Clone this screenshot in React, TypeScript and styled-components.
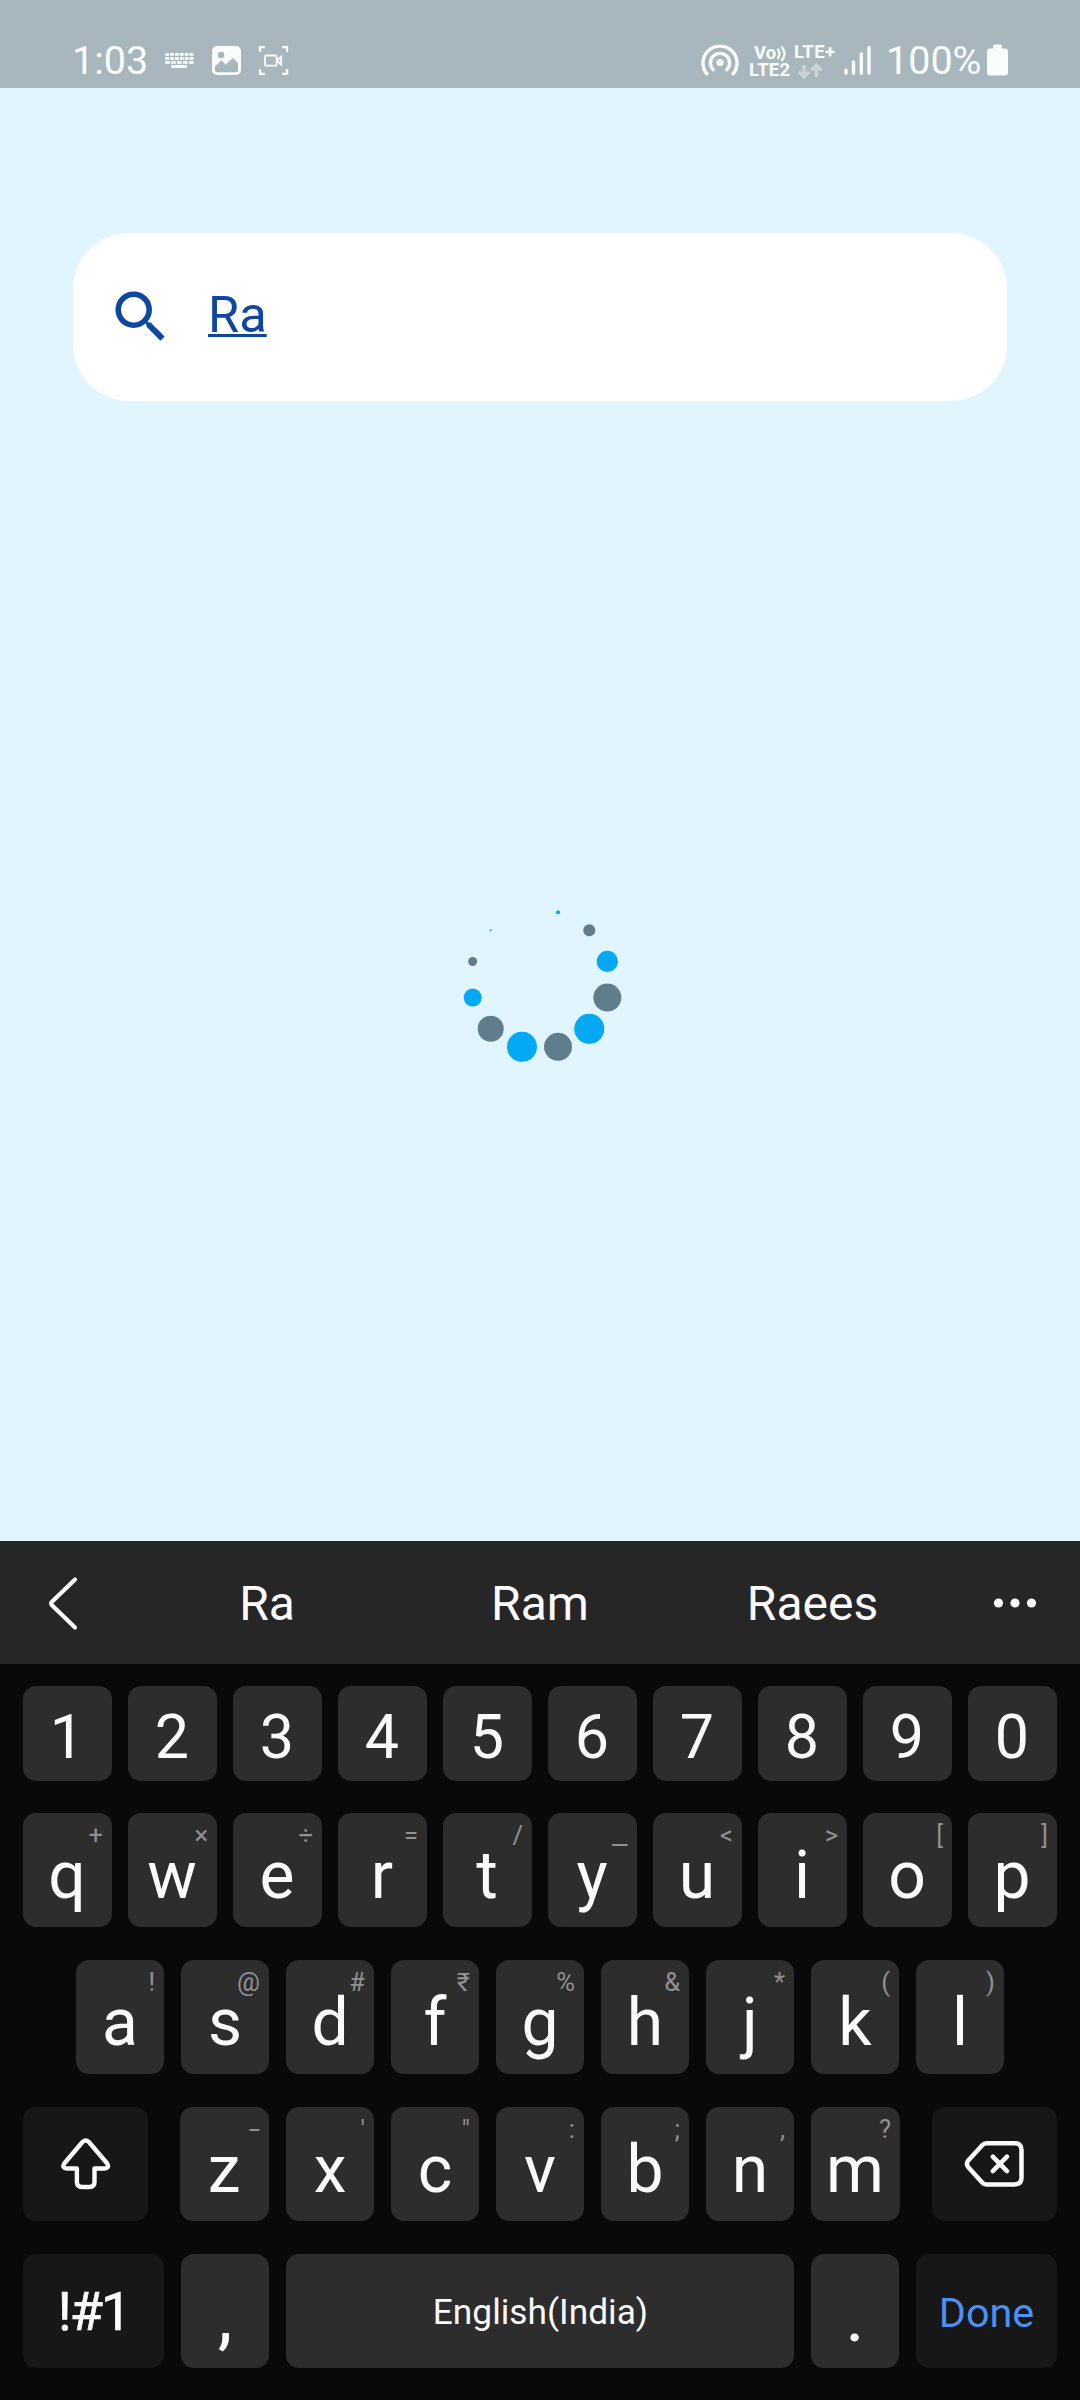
import React from "react";
import styled, { createGlobalStyle } from "styled-components";

const Global = createGlobalStyle`
  html, body { margin: 0; padding: 0; background: #e1f5fe; }
  * { box-sizing: border-box; }
`;

const Screen = styled.div`
  width: 1080px;
  height: 2400px;
  display: flex;
  flex-direction: column;
  background: #e1f5fe;
  font-family: Roboto, "Noto Sans", sans-serif;
  overflow: hidden;
`;

const StatusBar = styled.header`
  height: 88px;
  flex: none;
  padding: 36px 70px 0 72px;
  display: flex;
  justify-content: space-between;
  background: #a8b6bd;
  color: #fafcfc;
`;

const StatusGroup = styled.div`
  display: flex;
  align-items: flex-start;
`;

const StatusText = styled.span<{ $width: number }>`
  width: ${(p) => p.$width}px;
  padding-top: 1px;
  font-size: 39.5px;
  line-height: 47px;
  white-space: nowrap;
`;

const Glyph = styled.svg<{ $left?: number }>`
  display: block;
  flex: none;
  margin-left: ${(p) => p.$left ?? 0}px;
`;

const NetworkText = styled.text`
  font-family: Roboto, sans-serif;
  font-weight: 700;
  fill: #fafcfc;
`;

const Main = styled.main`
  flex: 1;
  padding: 145px 73px 0;
  display: flex;
  flex-direction: column;
  align-items: center;
`;

const SearchBox = styled.div`
  width: 934px;
  height: 168px;
  flex: none;
  border-radius: 56px;
  background: #fff;
  padding-left: 33.5px;
  display: flex;
  align-items: center;
`;

const SearchText = styled.span`
  margin-left: 34px;
  padding-bottom: 4px;
  font-size: 50.6px;
  line-height: 60px;
  color: #0d47a1;
  text-decoration: underline;
  text-decoration-thickness: 3px;
  text-underline-offset: 2px;
  text-decoration-skip-ink: none;
`;

const Spinner = styled.svg`
  display: block;
  margin-top: 488px;
`;

const Keyboard = styled.section`
  height: 859px;
  flex: none;
  background: #090909;
  color: #fafafa;
`;

const Suggestions = styled.div`
  height: 123px;
  background: #262626;
  display: grid;
  grid-template-columns: 125px 284px 262px 283px 126px;
  align-items: center;
  justify-items: center;
`;

const Suggestion = styled.span`
  padding-top: 2px;
  font-size: 48px;
  line-height: 56px;
`;

const Rows = styled.div`
  padding: 22px 23px 0;
  display: flex;
  flex-direction: column;
  gap: 33px;
`;

const Row = styled.div<{ $inset?: number; $after?: number }>`
  display: flex;
  justify-content: space-between;
  padding: 0 ${(p) => p.$inset ?? 0}px;
  margin-bottom: ${(p) => p.$after ?? 0}px;
`;

const LetterGroup = styled.div`
  width: 720px;
  display: flex;
  justify-content: space-between;
`;

const Key = styled.div<{ $w?: number; $h?: number; $dark?: boolean }>`
  position: relative;
  width: ${(p) => p.$w ?? 88}px;
  height: ${(p) => p.$h ?? 114}px;
  border-radius: 13px;
  background: ${(p) => (p.$dark ? "#171717" : "#2d2d2d")};
  display: flex;
  justify-content: center;
`;

const Label = styled.span<{ $size: number; $top: number; $color?: string; $spacing?: number; $shift?: number; $heavy?: boolean }>`
  font-size: ${(p) => p.$size}px;
  line-height: 80px;
  height: 80px;
  margin-top: ${(p) => p.$top}px;
  margin-right: ${(p) => p.$shift ?? 0}px;
  color: ${(p) => p.$color ?? "#fafafa"};
  letter-spacing: ${(p) => p.$spacing ?? 0}px;
  -webkit-text-stroke: ${(p) => (p.$heavy ? "0.7px #fafafa" : "0")};
  white-space: nowrap;
`;

const Hint = styled.span<{ $stretch: number }>`
  position: absolute;
  top: 7px;
  right: 9px;
  font-size: 25.5px;
  line-height: 30px;
  color: #919191;
  transform: scaleX(${(p) => p.$stretch});
  transform-origin: right center;
`;

const digits = "1234567890".split("");
const topRow = ["q+", "w×", "e÷", "r=", "t/", "y_", "u<", "i>", "o[", "p]"];
const midRow = ["a!", "s@", "d#", "f₹", "g%", "h&", "j*", "k(", "l)"];
const lowRow = ["z-", "x'", 'c"', "v:", "b;", "n,", "m?"];
const hintStretch: Record<string, number> = { "-": 1.6, _: 1.35 };

function Letter({ pair, w = 88 }: { pair: string; w?: number }) {
  return (
    <Key $w={w}>
      <Hint $stretch={hintStretch[pair[1]] ?? 1}>{pair[1]}</Hint>
      <Label $size={66} $top={23} $shift={w - 88}>{pair[0]}</Label>
    </Key>
  );
}

const dotRadii = [2, 6, 10.6, 14, 15, 14, 15, 13, 9, 4.5, 1, 0.2];

function Loading() {
  return (
    <Spinner width="180" height="180" viewBox="-90 -90.5 180 180">
      {dotRadii.map((r, i) => {
        const a = ((i * 30 - 75) * Math.PI) / 180;
        return (
          <circle
            key={i}
            cx={Math.cos(a) * 69.7}
            cy={Math.sin(a) * 69.7}
            r={r}
            fill={i % 2 ? "#607d8b" : "#03a9f4"}
          />
        );
      })}
    </Spinner>
  );
}

function KeyboardGlyph() {
  return (
    <Glyph $left={16} width="30" height="52" viewBox="165 36 30 52" fill="#fafcfc">
      {[0, 1, 2, 3, 4, 5].map((i) => (
        <rect key={i} x={165.3 + i * 4.85} y="53" width="3.8" height="2.8" />
      ))}
      {[0, 1, 2, 3, 4, 5].map((i) => (
        <rect key={i} x={165.3 + i * 4.85} y="57" width="3.8" height="3" />
      ))}
      {[0, 1, 2, 3, 4].map((i) => (
        <rect key={i} x={165.3 + i * 5.9} y="61.2" width="4.7" height="2.6" />
      ))}
      <rect x="171" y="65" width="16" height="3" />
    </Glyph>
  );
}

function PictureGlyph() {
  return (
    <Glyph $left={17} width="30" height="52" viewBox="212 36 30 52">
      <rect x="212" y="46" width="29" height="29" rx="5" fill="#fafcfc" />
      <circle cx="221" cy="55" r="3.2" fill="#a8b6bd" />
      <path d="M215 66.5l6.3-6.3 4.2 4.2 7.5-6.4 5 5v7.2a2 2 0 0 1-2 2h-19a2 2 0 0 1-2-2z" fill="#a8b6bd" />
    </Glyph>
  );
}

function RecordGlyph() {
  return (
    <Glyph $left={16} width="32" height="52" viewBox="258 36 32 52" fill="none" stroke="#fafcfc">
      <path d="M260 52v-4.8h5M282 47.2h5V52M287 69v4.8h-5M265 73.8h-5V69" strokeWidth="2.3" />
      <rect x="265" y="55.5" width="11.6" height="10.2" rx="1" strokeWidth="1.8" />
      <path d="M277 60.5l4.2-4v8.2l-4.2-4z" strokeWidth="1.8" />
    </Glyph>
  );
}

function HotspotGlyph() {
  return (
    <Glyph width="38" height="52" viewBox="701 36 38 52" fill="none" stroke="#fafcfc" strokeWidth="3.4">
      <circle cx="720" cy="62.5" r="3.6" fill="#fafcfc" stroke="none" />
      <path d="M714.2 70.6a9.6 9.6 0 1 1 11.6 0" />
      <path d="M707.8 75a17 17 0 1 1 24.4 0" />
    </Glyph>
  );
}

function NetworkGlyph() {
  return (
    <Glyph $left={10} width="88" height="52" viewBox="749 36 88 52">
      <NetworkText x="754" y="59.3" fontSize="18.5">Vo</NetworkText>
      <path d="M777.5 48.8q3.8 5 0 10M781.5 46.6q6 7.2 0 14.4" fill="none" stroke="#fafcfc" strokeWidth="2.3" />
      <NetworkText x="749" y="76" fontSize="18.5" textLength="41">LTE2</NetworkText>
      <NetworkText x="794" y="58" fontSize="18.5" textLength="41">LTE+</NetworkText>
      <path
        d="M804 65v11.5M799 71.8l5 5 5-5M816.3 77V65.5M811.3 70.2l5-5 5 5"
        fill="none"
        stroke="#c9d3d8"
        strokeWidth="3.4"
      />
    </Glyph>
  );
}

function SignalGlyph() {
  return (
    <Glyph $left={6} width="30" height="52" viewBox="843 36 30 52" stroke="#fafcfc" strokeWidth="3.4" strokeLinecap="round">
      <path d="M846 70.3v3M853.5 62v11.3M861.3 54v19.3M869 47.5v25.8" />
    </Glyph>
  );
}

export default function App() {
  return (
    <>
      <Global />
      <Screen>
        <StatusBar>
          <StatusGroup>
            <StatusText $width={77}>1:03</StatusText>
            <KeyboardGlyph />
            <PictureGlyph />
            <RecordGlyph />
          </StatusGroup>
          <StatusGroup>
            <HotspotGlyph />
            <NetworkGlyph />
            <SignalGlyph />
            <Glyph width="13" height="52" />
            <StatusText $width={96}>100%</StatusText>
            <Glyph $left={4} width="24" height="52" viewBox="986 36 24 52" fill="#fafcfc">
              <path d="M993 47a2 2 0 0 1 2-2.5h5a2 2 0 0 1 2 2.5v1.5h3a3 3 0 0 1 3 3v21a3 3 0 0 1-3 3h-15a3 3 0 0 1-3-3v-21a3 3 0 0 1 3-3h3z" />
            </Glyph>
          </StatusGroup>
        </StatusBar>

        <Main>
          <SearchBox>
            <Glyph width="67.5" height="67.5" viewBox="0 0 24 24" fill="#0d47a1">
              <path d="M15.5 14h-.79l-.28-.27A6.47 6.47 0 0 0 16 9.5 6.5 6.5 0 1 0 9.5 16c1.61 0 3.09-.59 4.23-1.57l.27.28v.79l5 4.99L20.49 19l-4.99-5zm-6 0C7.01 14 5 11.99 5 9.5S7.01 5 9.5 5 14 7.01 14 9.5 11.99 14 9.5 14z" />
            </Glyph>
            <SearchText>Ra</SearchText>
          </SearchBox>
          <Loading />
        </Main>

        <Keyboard>
          <Suggestions>
            <Glyph width="40" height="60" viewBox="42 1573.5 40 60" fill="none" stroke="#fafafa" strokeWidth="4.2" strokeLinecap="round" strokeLinejoin="round">
              <path d="M74 1580L51 1602.3q-1.6 1.7 0 3.4L74 1628" />
            </Glyph>
            <Suggestion>Ra</Suggestion>
            <Suggestion>Ram</Suggestion>
            <Suggestion>Raees</Suggestion>
            <Glyph width="60" height="21" viewBox="988 1592.5 60 21" fill="#fafafa">
              <circle cx="999.5" cy="1603.5" r="4.6" />
              <circle cx="1016" cy="1603.5" r="4.6" />
              <circle cx="1032.5" cy="1603.5" r="4.6" />
            </Glyph>
          </Suggestions>
          <Rows>
            <Row $after={-1}>
              {digits.map((d) => (
                <Key key={d} $w={89} $h={95}>
                  <Label $size={61} $top={11} $shift={1}>{d}</Label>
                </Key>
              ))}
            </Row>
            <Row>
              {topRow.map((p) => <Letter key={p} pair={p} w={89} />)}
            </Row>
            <Row $inset={53}>
              {midRow.map((p) => <Letter key={p} pair={p} />)}
            </Row>
            <Row>
              <Key $w={125} $dark>
                <Glyph width="125" height="114" viewBox="23 2107 125 114" fill="none" stroke="#fafafa" strokeWidth="4.4" strokeLinejoin="round">
                  <path d="M82.5 2142q3.2-3 6.4 0l18.3 21.5q2.5 4.5-2.5 5h-10.2v13.5q0 5-5 5h-7.6q-5 0-5-5v-13.5h-10.2q-5-.5-2.5-5z" />
                </Glyph>
              </Key>
              <LetterGroup>
                {lowRow.map((p, i) => <Letter key={p} pair={p} w={i === 0 || i === 6 ? 89 : 88} />)}
              </LetterGroup>
              <Key $w={125} $dark>
                <Glyph width="125" height="114" viewBox="932 2107 125 114" fill="none" stroke="#fafafa" strokeWidth="4.5" strokeLinejoin="round" strokeLinecap="round">
                  <path d="M986.5 2143.2h28q7 0 7 7v27.2q0 7-7 7h-28q-2.5 0-4.3-2l-13.7-15q-3.2-3.6 0-7.2l13.7-15q1.8-2 4.3-2z" />
                  <path d="M992.8 2156.7l14.2 14.4M1007 2156.7l-14.2 14.4" />
                </Glyph>
              </Key>
            </Row>
            <Row>
              <Key $w={141} $dark><Label $size={54} $top={18} $spacing={-2} $heavy>!#1</Label></Key>
              <Key><Label $size={74} $top={22}>,</Label></Key>
              <Key $w={508}><Label $size={35.3} $top={18} $shift={-1}>English(India)</Label></Key>
              <Key><Label $size={74} $top={22}>.</Label></Key>
              <Key $w={141} $dark><Label $size={41.3} $top={19} $color="#4a90f5">Done</Label></Key>
            </Row>
          </Rows>
        </Keyboard>
      </Screen>
    </>
  );
}
